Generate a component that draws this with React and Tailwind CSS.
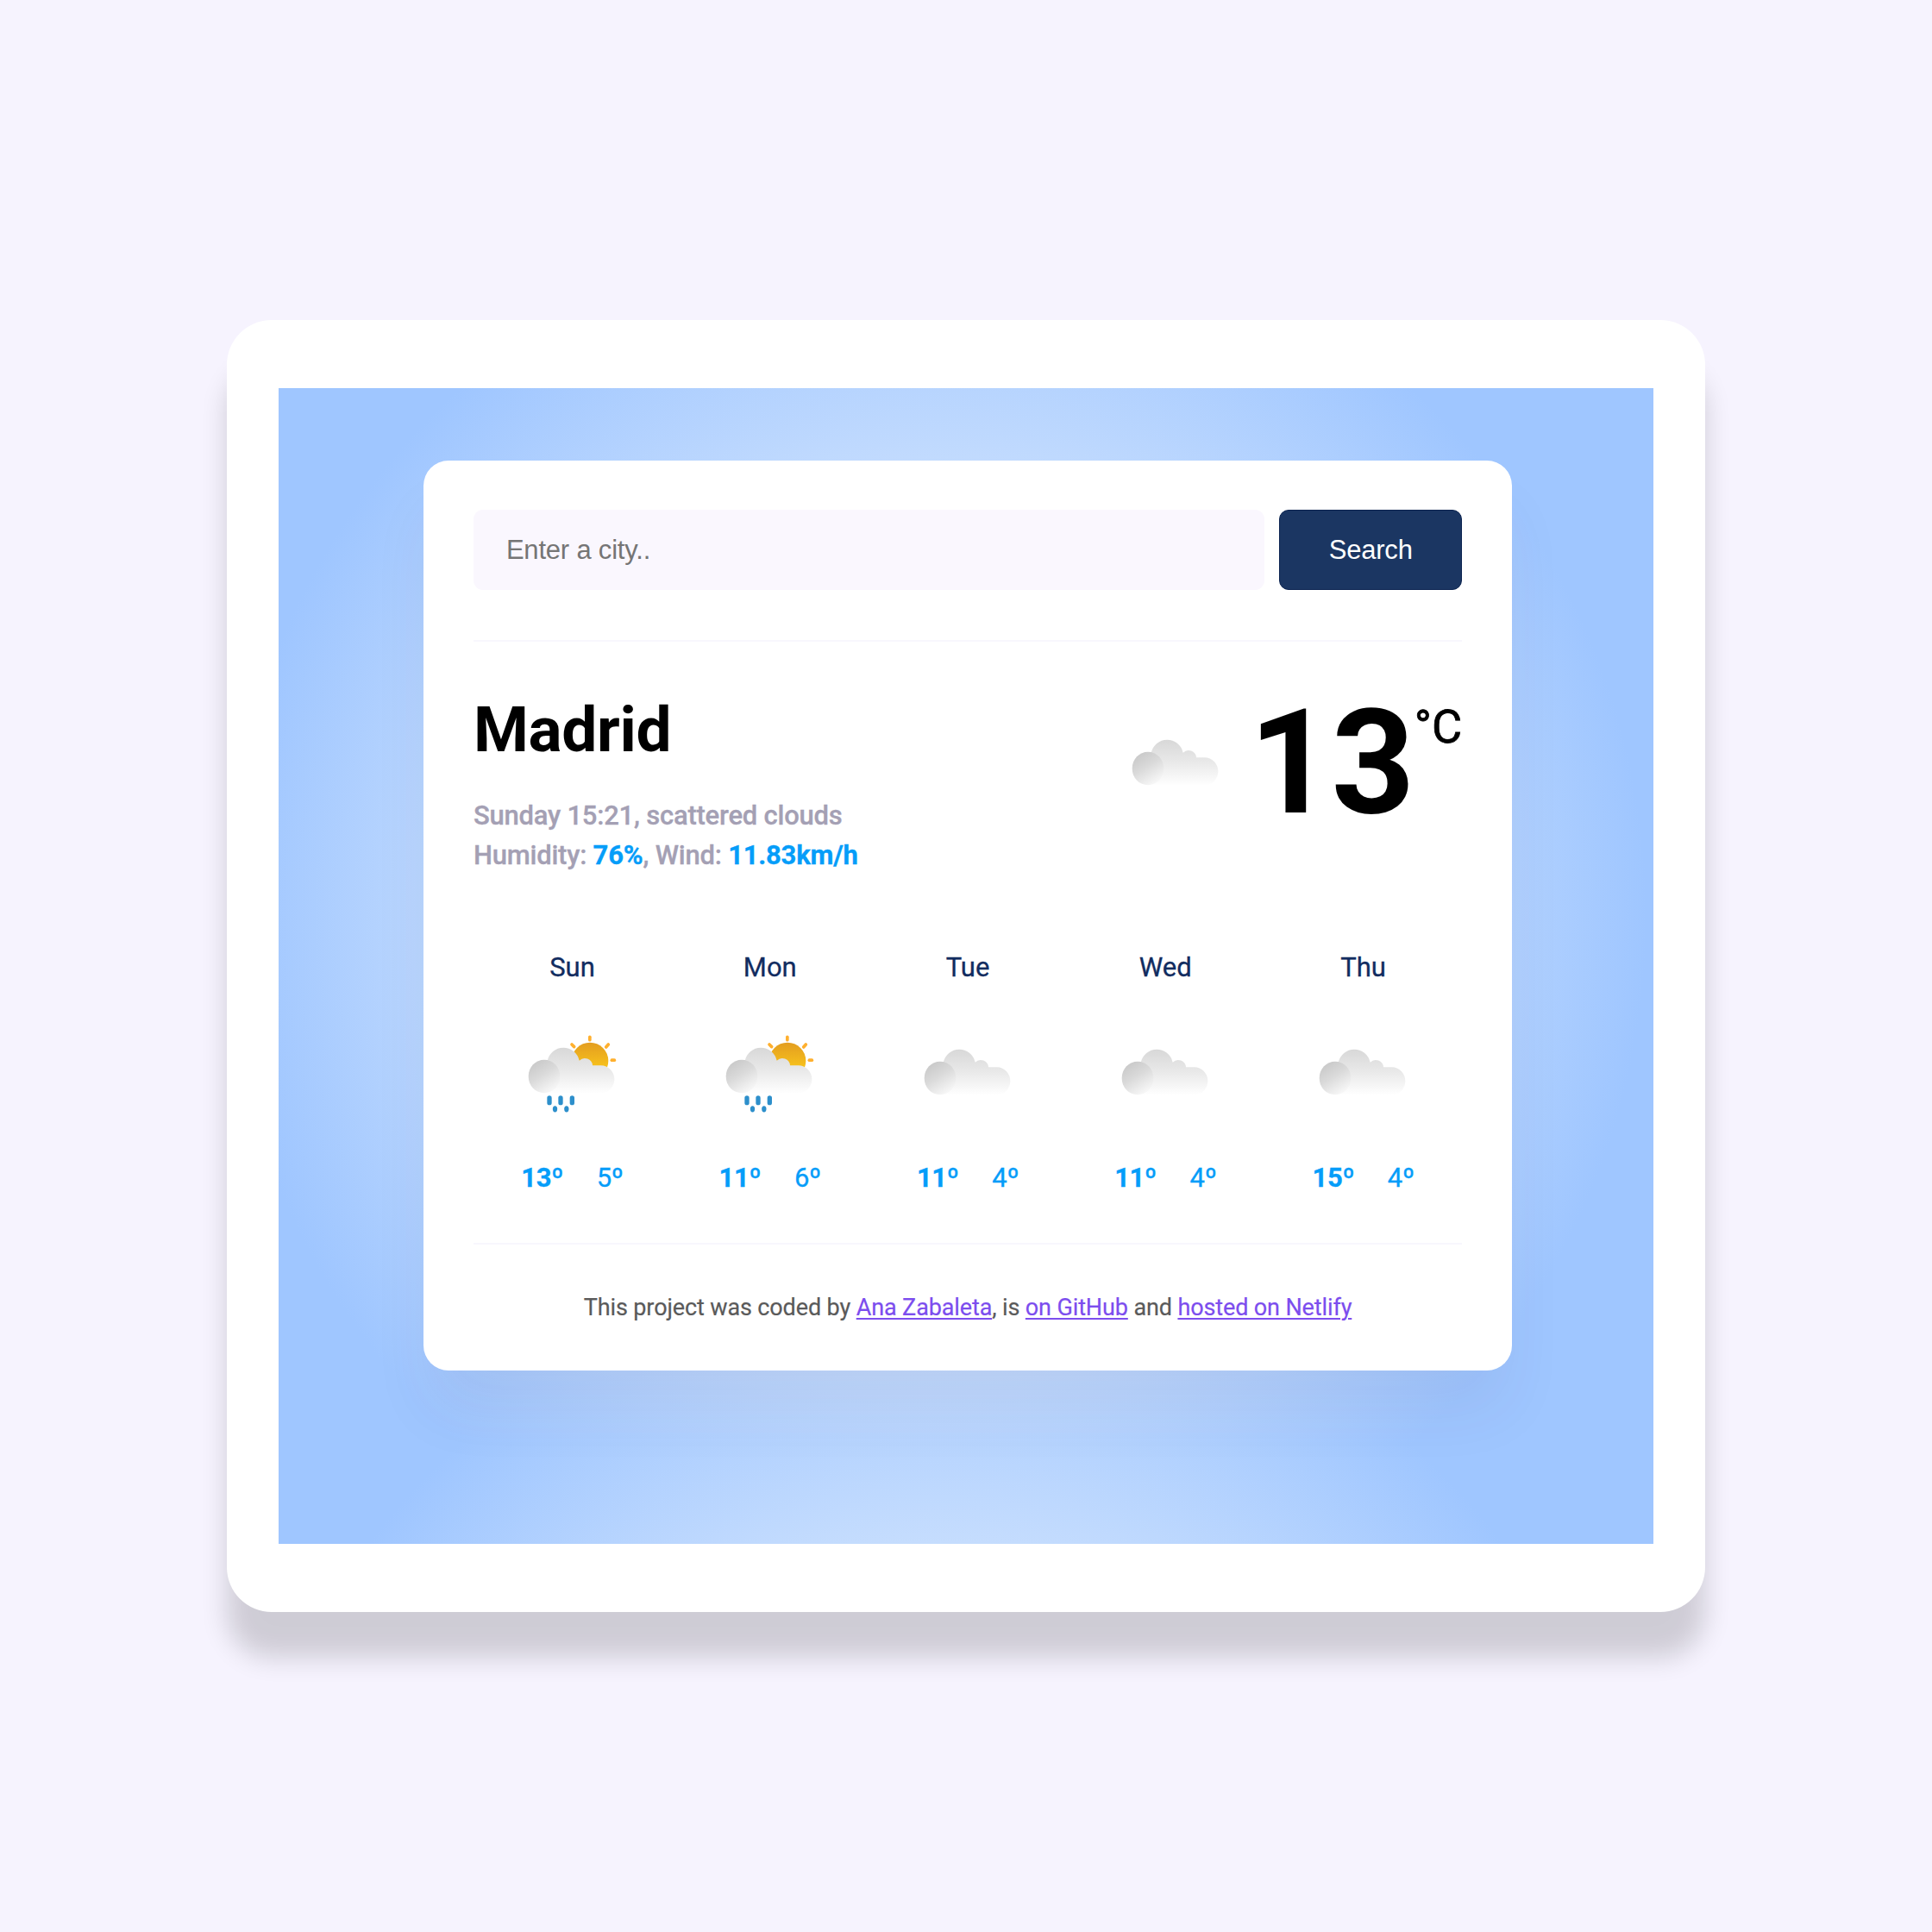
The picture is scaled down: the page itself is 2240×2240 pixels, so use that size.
const forecast = [
  { day: "Sun", icon: "rain", max: 13, min: 5 },
  { day: "Mon", icon: "rain", max: 11, min: 6 },
  { day: "Tue", icon: "clouds", max: 11, min: 4 },
  { day: "Wed", icon: "clouds", max: 11, min: 4 },
  { day: "Thu", icon: "clouds", max: 15, min: 4 },
];

function WeatherIcon({ kind, id, className = "" }) {
  const rain = kind === "rain";
  return (
    <svg viewBox="98 361 303 270" className={`h-[90px] w-[101px] shrink-0 overflow-visible ${className}`} aria-hidden="true">
      <defs>
        <linearGradient id={`${id}-body`} gradientUnits="userSpaceOnUse" x1="0" y1="405" x2="0" y2="560">
          <stop offset="0" stopColor="#d8d8d8" />
          <stop offset="0.5" stopColor="#e9e9e9" />
          <stop offset="1" stopColor="#fefefe" />
        </linearGradient>
        <linearGradient id={`${id}-puff`} gradientUnits="userSpaceOnUse" x1="120" y1="450" x2="185" y2="556">
          <stop offset="0" stopColor="#c8c8c8" />
          <stop offset="0.45" stopColor="#dadada" />
          <stop offset="1" stopColor="#f9f9f9" />
        </linearGradient>
        <linearGradient id={`${id}-sun`} x1="0" y1="0" x2="0" y2="1">
          <stop offset="0" stopColor="#e39d20" />
          <stop offset="0.7" stopColor="#f8c31c" />
        </linearGradient>
      </defs>
      <g transform={rain ? "translate(-1 -2)" : "translate(-1 4)"}>
        {rain && (
          <g>
            <circle cx="312" cy="450" r="64" fill={`url(#${id}-sun)`} />
            <g stroke="#ffb02e" strokeWidth="11" strokeLinecap="round">
              <path d="M311.500 367v10" />
              <path d="M388 447.500h9" />
              <path d="M376 393l-8 9" />
              <path d="M249 393l8 8" />
            </g>
          </g>
        )}
        <path
          d="M152 562V480L164 450A57 59 0 0 1 275 449A27 27 0 0 1 321 466H350A47 48 0 0 1 350 562Z"
          fill={`url(#${id}-body)`}
        />
        <ellipse cx="153" cy="504" rx="55" ry="58" fill={`url(#${id}-puff)`} />
        {rain && (
          <g fill="#2d8fcb">
            <rect x="163" y="571" width="16" height="33" rx="8" />
            <rect x="202" y="571" width="16" height="33" rx="8" />
            <rect x="242" y="571" width="16" height="33" rx="8" />
            <ellipse cx="190.500" cy="617.500" rx="8" ry="11" />
            <ellipse cx="230.500" cy="617.500" rx="8" ry="11" />
          </g>
        )}
      </g>
    </svg>
  );
}

const link = "text-[#7c4dee] underline decoration-2 underline-offset-[3px]";

export default function App() {
  return (
    <div className="flex h-[2240px] w-[2240px] items-center justify-center bg-[#f6f3fe] font-[Roboto,sans-serif]">
      <div className="flex h-[1498px] w-[1714px] items-center justify-center rounded-[52px] bg-white shadow-[0_53px_30px_rgba(0,0,0,0.16)]">
        <div className="h-[1340px] w-[1594px] overflow-hidden bg-[radial-gradient(circle_824px_at_762px_612px,#fffffc,#9fc6ff)] bg-[length:100%_1224px] pt-[84px]">
          <main className="ml-[168.400px] h-[1055px] w-[1261.300px] rounded-[29px] bg-white px-[57.500px] pt-[57px] shadow-[0_52px_72px_-10px_rgba(65,50,100,0.08)]">
            <form className="flex h-[93px] gap-[17px] font-['Liberation_Sans',Arial,sans-serif] text-[31px]">
              <input
                type="text"
                placeholder="Enter a city.."
                className="min-w-0 flex-1 rounded-[11px] bg-[#faf7fe] px-[38px] pt-[2px] tracking-[-0.2px] placeholder:text-[#757575]"
              />
              <button
                type="button"
                className="w-[212px] rounded-[11px] border border-[#0b2350] bg-[#1b3662] pt-[2px] tracking-[-0.200px] text-white"
              >
                Search
              </button>
            </form>
            <div className="mt-[58px] h-[2px] bg-[#f8f7fd]" />

            <section className="flex h-[272px] justify-between">
              <div>
                <h1 className="mt-[62px] text-[73px] leading-[80px] font-bold tracking-[-0.300px] text-black">Madrid</h1>
                <p className="mt-[37px] text-[31px] leading-[46px] font-medium tracking-[-0.220px] text-[#a4a0b4] [-webkit-text-stroke:0.3px]">
                  Sunday 15:21, scattered clouds
                  <br />
                  Humidity: <strong className="font-bold text-[#059df9]">76%</strong>, Wind:{" "}
                  <strong className="font-bold text-[#059df9]">11.83km/h</strong>
                </p>
              </div>
              <div className="flex items-start text-black">
                <WeatherIcon kind="clouds" id="now" className="mt-[97.500px] mr-[33.500px]" />
                <span className="mt-[56px] mr-[1px] text-[169px] leading-[169px] font-bold tracking-[-1.500px]">13</span>
                <span className="mt-[72px] text-[54px] leading-[54px] [-webkit-text-stroke:0.8px]">°C</span>
              </div>
            </section>

            <section className="mt-[83px] grid grid-cols-5 text-center text-[31px] leading-[46px] [-webkit-text-stroke:0.3px]">
              {forecast.map((item) => (
                <div key={item.day} className="flex flex-col items-center">
                  <div className="text-[#112c60]">{item.day}</div>
                  <WeatherIcon kind={item.icon} id={item.day} className="mt-[56px]" />
                  <div className="mt-[52px] flex gap-[38.500px] tracking-[-0.300px] text-[#059df9]">
                    <span className="font-bold">{item.max}º</span>
                    <span>{item.min}º</span>
                  </div>
                </div>
              ))}
            </section>

            <div className="mt-[52px] h-[2px] bg-[#f8f7fd]" />
            <footer className="mt-[53px] text-center text-[27px] leading-[40px] tracking-[-0.125px] whitespace-nowrap text-[#5a5a5a] [-webkit-text-stroke:0.2px]">
              This project was coded by <a className={link}>Ana Zabaleta</a>, is <a className={link}>on GitHub</a> and{" "}
              <a className={link}>hosted on Netlify</a>
            </footer>
          </main>
        </div>
      </div>
    </div>
  );
}
